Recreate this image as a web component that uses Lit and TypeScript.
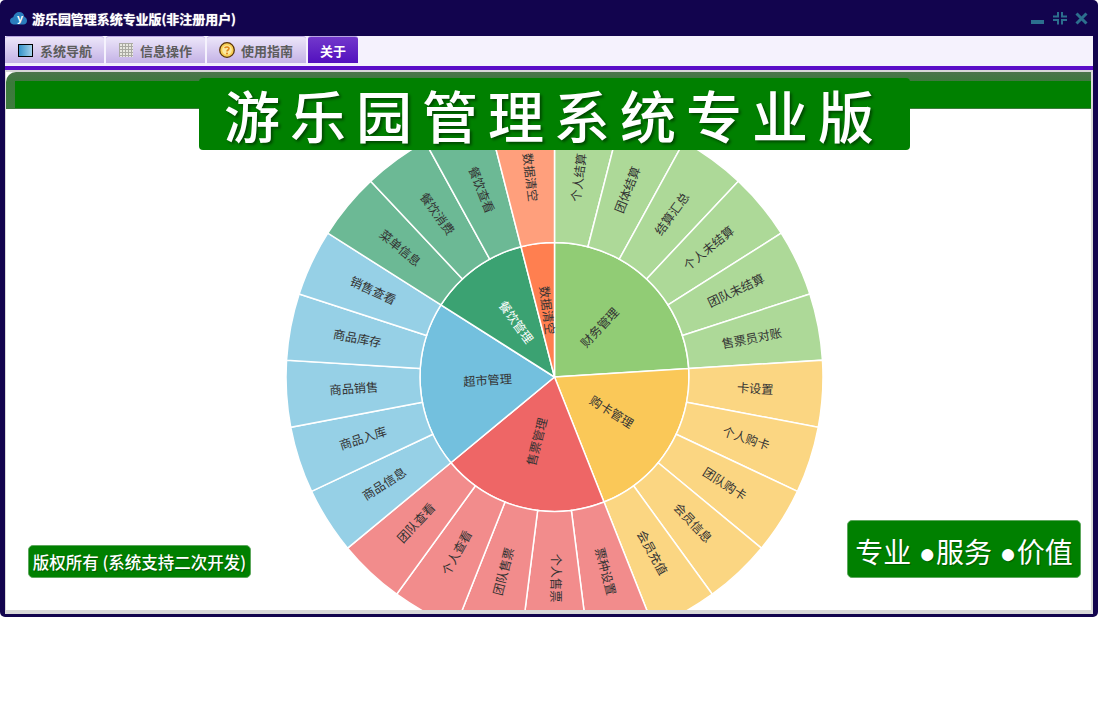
import { LitElement, html, css, svg } from "lit";
import { customElement } from "lit/decorators.js";

const CX = 548.5;
const CY = 268;
const R1 = 134.5;
const R2 = 268.5;
const UNIT = 14.4;

interface Group {
  name: string;
  color: string;
  labelColor?: string;
  children: string[];
}

const GROUPS: Group[] = [
  { name: "财务管理", color: "#91cc75", children: ["个人结算", "团体结算", "结算汇总", "个人未结算", "团队未结算", "售票员对账"] },
  { name: "购卡管理", color: "#fac858", children: ["卡设置", "个人购卡", "团队购卡", "会员信息", "会员充值"] },
  { name: "售票管理", color: "#ee6666", children: ["票种设置", "个人售票", "团队售票", "个人查看", "团队查看"] },
  { name: "超市管理", color: "#73c0de", children: ["商品信息", "商品入库", "商品销售", "商品库存", "销售查看"] },
  { name: "餐饮管理", color: "#3ba272", labelColor: "#ffffff", children: ["菜单信息", "餐饮消费", "餐饮查看"] },
  { name: "数据清空", color: "#ff7f50", children: ["数据清空"] },
];

const pt = (r: number, deg: number): [number, number] => {
  const a = (deg * Math.PI) / 180;
  return [CX + r * Math.sin(a), CY - r * Math.cos(a)];
};

const sector = (r0: number, r1: number, a0: number, a1: number) => {
  const large = a1 - a0 > 180 ? 1 : 0;
  const [x1, y1] = pt(r1, a0);
  const [x2, y2] = pt(r1, a1);
  if (r0 === 0) return `M${CX} ${CY}L${x1} ${y1}A${r1} ${r1} 0 ${large} 1 ${x2} ${y2}Z`;
  const [x3, y3] = pt(r0, a1);
  const [x4, y4] = pt(r0, a0);
  return `M${x4} ${y4}L${x1} ${y1}A${r1} ${r1} 0 ${large} 1 ${x2} ${y2}L${x3} ${y3}A${r0} ${r0} 0 ${large} 0 ${x4} ${y4}Z`;
};

const label = (text: string, r: number, mid: number, fill: string) => {
  const [x, y] = pt(r, mid);
  const rot = mid <= 180 ? mid - 90 : mid - 270;
  return svg`<text class="lbl" x=${x} y=${y} dy="-1.5" fill=${fill} text-anchor="middle" dominant-baseline="central"
    transform="rotate(${rot} ${x} ${y})">${text}</text>`;
};

const renderChart = () => {
  let a = 0;
  const parts: unknown[] = [];
  for (const g of GROUPS) {
    const start = a;
    const end = a + g.children.length * UNIT;
    parts.push(svg`<path d=${sector(0, R1, start, end)} fill=${g.color} stroke="#fff" stroke-width="1.5"></path>`);
    parts.push(label(g.name, 67, (start + end) / 2, g.labelColor ?? "#333"));
    g.children.forEach((c, i) => {
      const s = start + i * UNIT;
      const e = s + UNIT;
      parts.push(svg`<path d=${sector(R1, R2, s, e)} fill=${g.color} fill-opacity="0.75" stroke="#fff" stroke-width="1.5"></path>`);
      parts.push(label(c, 201, s + UNIT / 2, "#333"));
    });
    a = end;
  }
  return parts;
};

@customElement("app-root")
export class AppRoot extends LitElement {
  static styles = css`
    :host {
      display: block;
      width: 1099px;
      height: 723px;
      background: #fff;
      font-family: "Noto Sans CJK SC", "Liberation Sans", sans-serif;
    }
    .window {
      width: 1098px;
      height: 617px;
      box-sizing: border-box;
      background: #12044e;
      border-radius: 5px;
      padding: 0 5px 3px;
      display: flex;
      flex-direction: column;
    }
    .title {
      height: 36px;
      flex: none;
      display: flex;
      align-items: center;
      color: #fff;
      font-size: 13px;
      font-weight: 700;
      padding: 0 5px 0 5px;
      gap: 5px;
    }
    .title-text {
      flex: 1;
      letter-spacing: -0.05px;
      text-shadow: 0 0 1px #ccc;
    }
    .controls {
      display: flex;
      align-items: center;
      gap: 7px;
    }
    .controls svg {
      display: block;
    }
    .logo-y {
      font-family: "Liberation Sans", sans-serif;
      font-size: 11px;
      font-weight: 700;
      fill: #fff;
    }
    .tabs {
      height: 30px;
      flex: none;
      display: flex;
      gap: 2px;
      background: #f5f2fd;
      border-bottom: 4px solid #5a0dc8;
    }
    .tab {
      height: 29px;
      box-sizing: border-box;
      display: flex;
      align-items: center;
      font-size: 13px;
      font-weight: 700;
      color: #5c5c5c;
      border-radius: 3px 3px 0 0;
      border-bottom: 2px solid #f1ecfb;
      border-top: 1px solid #b9a6e2;
      background: linear-gradient(#ece6f9, #c4b2e6);
    }
    .tab.t1 {
      width: 99px;
      padding-left: 13px;
      gap: 7px;
    }
    .tab.t2 {
      width: 99px;
      padding-left: 13px;
      gap: 7px;
    }
    .tab.t3 {
      width: 99px;
      padding-left: 12px;
      gap: 6px;
    }
    .tab.active {
      width: 50px;
      justify-content: center;
      color: #fff;
      background: linear-gradient(#7238cb, #5210be);
    }
    .main {
      flex: 1;
      min-height: 0;
      background: #d8d8d8;
      padding: 2px 2px 4px 1px;
      display: flex;
      flex-direction: column;
    }
    .panel {
      flex: 1;
      min-height: 0;
      position: relative;
      background: #fff;
      display: flex;
      flex-direction: column;
      overflow: hidden;
    }
    .head {
      height: 37px;
      flex: none;
      box-sizing: border-box;
      padding: 9px 0 1px 9px;
      border-radius: 10px 0 0 0;
      background: linear-gradient(#4c744c, #3a7a3a 30%, #3f7b3f);
      display: flex;
    }
    .head-fill {
      flex: 1;
      background: #008000;
    }
    .chart {
      flex: 1;
      min-height: 0;
      display: block;
      width: 100%;
    }
    .lbl {
      font-size: 12.2px;
      font-family: "Noto Sans CJK SC", "Liberation Sans", sans-serif;
    }
    .banner {
      position: absolute;
      left: 193px;
      top: 6px;
      width: 711px;
      height: 72px;
      box-sizing: border-box;
      background: #008000;
      border-radius: 4px;
      color: #fff;
      font-size: 56px;
      font-weight: 500;
      letter-spacing: 10px;
      line-height: 72px;
      padding-left: 25px;
      white-space: nowrap;
      text-shadow: 2px 2px 3px rgba(0, 0, 0, 0.45);
    }
    .badge {
      position: absolute;
      box-sizing: border-box;
      background: #008000;
      border: 1px solid #5ea85e;
      border-radius: 5px;
      color: #fff;
      white-space: nowrap;
      display: flex;
      align-items: center;
      justify-content: center;
      text-shadow: 1px 1px 1px rgba(0, 0, 0, 0.3);
    }
    .copy {
      left: 22px;
      bottom: 32px;
      width: 223px;
      height: 33px;
      font-size: 16.5px;
      font-weight: 500;
    }
    .motto {
      right: 10px;
      bottom: 32px;
      width: 234px;
      height: 58px;
      font-family: "Liberation Sans", "Noto Sans CJK SC", sans-serif;
      font-size: 28px;
      padding-top: 3px;
    }
  `;

  render() {
    return html`
      <div class="window">
        <div class="title">
          <svg width="17" height="14" viewBox="0 0 17 14" aria-hidden="true">
            <path d="M3.500 13.500C1.200 13.500 0 11.500 0 9.800C0 8 1.200 6.500 3.200 6.300C4 3 6.500 1 9.200 1C12 1 14 3 14.400 5.800C16 6.500 17 8 17 9.800C17 12 15.500 13.500 13.500 13.500Z" fill="#2a7cbc"></path>
            <text class="logo-y" x="7" y="11">y</text>
          </svg>
          <span class="title-text">游乐园管理系统专业版(非注册用户)</span>
          <div class="controls">
            <svg width="14" height="14" viewBox="0 0 14 14" aria-hidden="true"><rect x="0" y="9" width="13" height="4" fill="#2c6f8e"></rect></svg>
            <svg width="16" height="14" viewBox="0 0 16 14" aria-hidden="true">
              <path d="M1 5.500H6V1M15 5.500H10V1M1 9H6V13.500M15 9H10V13.500" fill="none" stroke="#2c6f8e" stroke-width="2"></path>
            </svg>
            <svg width="13" height="13" viewBox="0 0 13 13" aria-hidden="true">
              <path d="M1.500 1.500L11.500 11.500M11.500 1.500L1.500 11.500" stroke="#2c6f8e" stroke-width="3"></path>
            </svg>
          </div>
        </div>
        <div class="tabs">
          <div class="tab t1">
            <svg width="15" height="13" viewBox="0 0 15 13" aria-hidden="true">
              <defs><linearGradient id="scr" x1="0" x2="1" y1="0" y2="0"><stop offset="0" stop-color="#2f8fc8"></stop><stop offset="1" stop-color="#a9d4ec"></stop></linearGradient></defs>
              <rect x="0.500" y="0.500" width="14" height="12" fill="url(#scr)" stroke="#000"></rect>
            </svg>
            <span>系统导航</span>
          </div>
          <div class="tab t2">
            <svg width="14" height="14" viewBox="0 0 14 14" aria-hidden="true">
              <rect width="14" height="14" fill="#e8e8e0"></rect>
              <path d="M0.500 0V14M3.500 0V14M6.500 0V14M9.500 0V14M12.500 0V14M0 0.500H14M0 3.500H14M0 6.500H14M0 9.500H14M0 12.500H14" stroke="#aaaaa2" stroke-width="1"></path>
            </svg>
            <span>信息操作</span>
          </div>
          <div class="tab t3">
            <svg width="16" height="16" viewBox="0 0 16 16" aria-hidden="true">
              <circle cx="8" cy="8" r="7.300" fill="#f8cf55" stroke="#5a3408" stroke-width="1.300"></circle>
              <circle cx="8" cy="8" r="4.800" fill="#fbe9a0"></circle>
              <path d="M5.800 6.200C6 4.500 10 4.500 10 6.500C10 8 8 8 8 9.500" fill="none" stroke="#e0861a" stroke-width="1.600"></path>
              <circle cx="8" cy="11.500" r="1" fill="#e0861a"></circle>
            </svg>
            <span>使用指南</span>
          </div>
          <div class="tab active">关于</div>
        </div>
        <div class="main">
          <div class="panel">
            <div class="head"><div class="head-fill"></div></div>
            <svg class="chart" viewBox="0 0 1085 501" role="img">${renderChart()}</svg>
            <div class="banner">游乐园管理系统专业版</div>
            <div class="badge copy">版权所有 (系统支持二次开发)</div>
            <div class="badge motto">专业 ●服务 ●价值</div>
          </div>
        </div>
      </div>
    `;
  }
}
